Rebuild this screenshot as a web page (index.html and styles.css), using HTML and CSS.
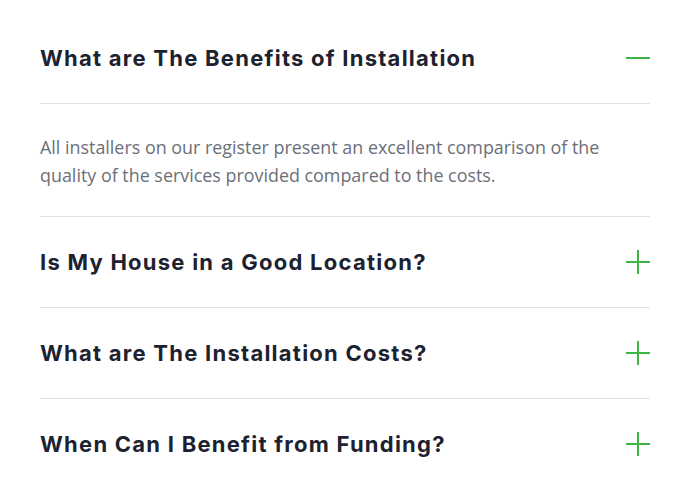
FILE: index.html
```html
<!DOCTYPE html>
<html lang="en">
<head>
<meta charset="utf-8">
<title>FAQ</title>
<link rel="stylesheet" href="styles.css">
</head>
<body>
<div class="faq">
  <div class="item open">
    <div class="head">
      <h3 class="title">What are The Benefits of Installation</h3>
      <svg class="icon" width="24" height="24" viewBox="0 0 24 24"><path d="M0 12H24" stroke="currentColor" stroke-width="2"/></svg>
    </div>
    <div class="body">
      <p>All installers on our register present an excellent comparison of the quality of the services provided compared to the costs.</p>
    </div>
  </div>
  <div class="item">
    <div class="head">
      <h3 class="title">Is My House in a Good Location?</h3>
      <svg class="icon" width="24" height="24" viewBox="0 0 24 24"><path d="M0 12H24M12 0V24" stroke="currentColor" stroke-width="2"/></svg>
    </div>
  </div>
  <div class="item">
    <div class="head">
      <h3 class="title">What are The Installation Costs?</h3>
      <svg class="icon" width="24" height="24" viewBox="0 0 24 24"><path d="M0 12H24M12 0V24" stroke="currentColor" stroke-width="2"/></svg>
    </div>
  </div>
  <div class="item last">
    <div class="head">
      <h3 class="title">When Can I Benefit from Funding?</h3>
      <svg class="icon" width="24" height="24" viewBox="0 0 24 24"><path d="M0 12H24M12 0V24" stroke="currentColor" stroke-width="2"/></svg>
    </div>
  </div>
</div>
</body>
</html>
```
FILE: styles.css
```css
html, body {
  margin: 0;
  padding: 0;
  background: #ffffff;
}
.faq {
  padding: 13px 40px 0 40px;
}
.item {
  border-bottom: 1px solid #e1e1e1;
}
.item.last {
  border-bottom: none;
}
.head {
  height: 90px;
  display: flex;
  align-items: center;
  justify-content: space-between;
}
.item.open .head {
  border-bottom: 1px solid #e1e1e1;
}
.title {
  margin: 0;
  font-family: Inter, "Liberation Sans", sans-serif;
  font-weight: 700;
  font-size: 22px;
  color: #1d2230;
  letter-spacing: 1.25px;
}
.icon {
  color: #3db646;
  display: block;
}
.body {
  padding: 29px 0 27px 0;
}
.body p {
  margin: 0;
  font-family: "Open Sans", sans-serif;
  font-size: 17.9px;
  line-height: 28px;
  color: #6b6f79;
}
```
